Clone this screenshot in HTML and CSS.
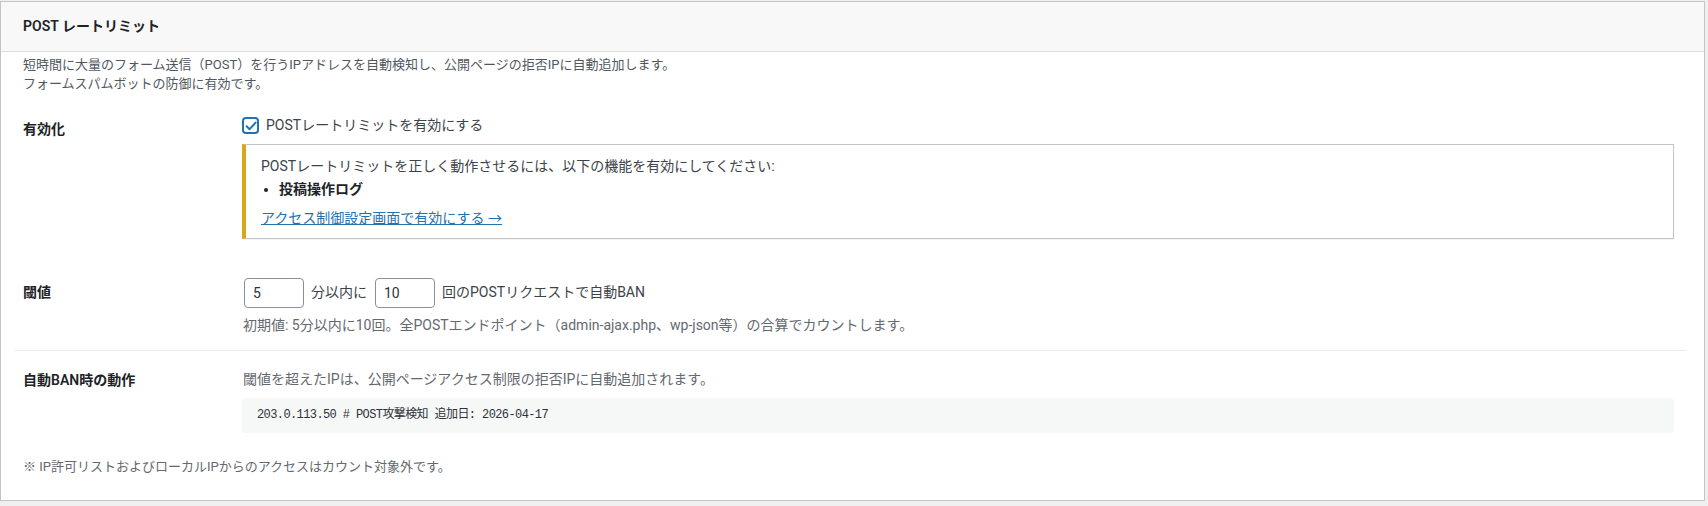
FILE: index.html
```html
<!DOCTYPE html>
<html lang="ja">
    <head>
        <meta charset="utf-8">
        <title>POST レートリミット</title>
        <link rel="stylesheet" href="styles.css">
    </head>
    <body>
        <div class="wrap">
        <div class="postbox">
            <h2 class="hndle">POST レートリミット</h2>

            <div class="inside">
                <p class="intro">短時間に大量のフォーム送信（POST）を行うIPアドレスを自動検知し、公開ページの拒否IPに自動追加します。<br>フォームスパムボットの防御に有効です。</p>

                <div class="form-table">

                    <!-- enable switch + warning about the required log -->
                    <div class="row">
                        <div class="th">有効化</div>
                        <div class="td">
                            <label class="check">
                                <span class="box">
                                    <svg width="12" height="12" viewBox="0 0 12 12"><path d="M1.6 6.2 L4.6 9.2 L10.6 2.6" fill="none" stroke="#2271b1" stroke-width="2" stroke-linecap="round" stroke-linejoin="round"/></svg>
                                </span>
                                POSTレートリミットを有効にする
                            </label>
                            <div class="notice">
                                <p>POSTレートリミットを正しく動作させるには、以下の機能を有効にしてください:</p>
                                <ul>
                                    <li>投稿操作ログ</li>
                                </ul>
                                <p><a href="#">アクセス制御設定画面で有効にする →</a></p>
                            </div>
                        </div>
                    </div>

                    <!-- threshold -->
                    <div class="row">
                        <div class="th">閾値</div>
                        <div class="td">
                            <div class="inline">
                                <input type="text" class="small" value="5">
                                <span>分以内に</span>
                                <input type="text" class="small" value="10">
                                <span>回のPOSTリクエストで自動BAN</span>
                            </div>
                            <p class="description">初期値: 5分以内に10回。全POSTエンドポイント（admin-ajax.php、wp-json等）の合算でカウントします。</p>
                        </div>
                    </div>

                    <hr class="sep">

                    <div class="row">
                        <div class="th">自動BAN時の動作</div>
                        <div class="td">
                            <p class="description">閾値を超えたIPは、公開ページアクセス制限の拒否IPに自動追加されます。</p>
                            <pre class="sample">203.0.113.50 # POST攻撃検知 追加日: 2026-04-17</pre>
                        </div>
                    </div>

                </div>

                <p class="note">※ IP許可リストおよびローカルIPからのアクセスはカウント対象外です。</p>
            </div>
        </div>
        </div>
    </body>
</html>
```

FILE: styles.css
```css
html, body {
    margin: 0;
    background: #f0f0f1;
}

body {
    font-family: Roboto, "Noto Sans CJK JP", sans-serif;
    font-size: 13px;
    line-height: 1.5;
    color: #3c434a;
}

.wrap {
    padding: 1px 3px 3px 0;
}

.postbox {
    background: #fff;
    border: 1px solid #c3c4c7;
}

.hndle {
    margin: 0;
    padding: 0 22px;
    height: 49px;
    line-height: 49px;
    font-size: 14px;
    font-weight: 600;
    color: #1d2327;
    background: #f8f8f8;
    border-bottom: 1px solid #dcdcde;
}

.inside {
    padding: 0 20px 24px 22px;
}

.intro {
    margin: 3px 0 0;
    line-height: 19px;
    color: #50575e;
}

.form-table {
    margin-top: 7px;
}

.row {
    display: grid;
    grid-template-columns: 210px 1fr;
}

.th {
    padding: 20px 10px 20px 0;
    font-size: 14px;
    font-weight: 600;
    line-height: 1.3;
    color: #1d2327;
}

.td {
    padding: 15px 10px;
    font-size: 14px;
}

/* checkbox */
.check {
    display: flex;
    align-items: center;
    gap: 7px;
    margin-left: -1px;
    line-height: 21px;
    color: #3c434a;
}

.box {
    box-sizing: border-box;
    width: 17px;
    height: 17px;
    border: 2px solid #2271b1;
    border-radius: 4px;
    display: flex;
    align-items: center;
    justify-content: center;
}

/* warning notice */
.notice {
    margin: 8px 0 9px -1px;
    padding: 12px 14px 9px 15px;
    border: 1px solid #c3c4c7;
    border-left: 4px solid #dba617;
    box-shadow: 0 1px 1px rgba(0, 0, 0, .04);
    font-size: 14px;
    line-height: 19.5px;
}

.notice p {
    margin: 0;
}

.notice ul {
    margin: 3px 0 10px;
    padding-left: 18px;
    font-weight: 600;
    color: #1d2327;
}

.notice a {
    color: #2271b1;
    text-decoration: underline;
}

/* threshold inputs */
.inline {
    display: flex;
    align-items: center;
    gap: 7px;
    line-height: 21px;
}

input.small {
    box-sizing: border-box;
    width: 60px;
    height: 30px;
    margin: 0 0 0 1px;
    padding: 0 8px;
    border: 1px solid #8c8f94;
    border-radius: 4px;
    font: 14px Roboto, "Noto Sans CJK JP", sans-serif;
    color: #2c3338;
    background: #fff;
}

.description {
    margin: 4px 0 0;
    font-size: 14px;
    line-height: 19.5px;
    color: #646970;
}

.inline + .description {
    margin-top: 8px;
}

.sep {
    margin: 0 -2px 0 -8px;
    border: 0;
    border-top: 1px solid #ebebeb;
}

.sample {
    margin: 8px 0 0 -1px;
    padding: 10px 15px;
    background: #f6f7f7;
    border-radius: 4px;
    font-family: "Liberation Mono", "Noto Sans CJK JP", monospace;
    font-size: 12px;
    letter-spacing: -0.6px;
    line-height: 15px;
    color: #2c3338;
}

.note {
    margin: 9px 0 0;
    line-height: 19.5px;
    color: #646970;
}
```
